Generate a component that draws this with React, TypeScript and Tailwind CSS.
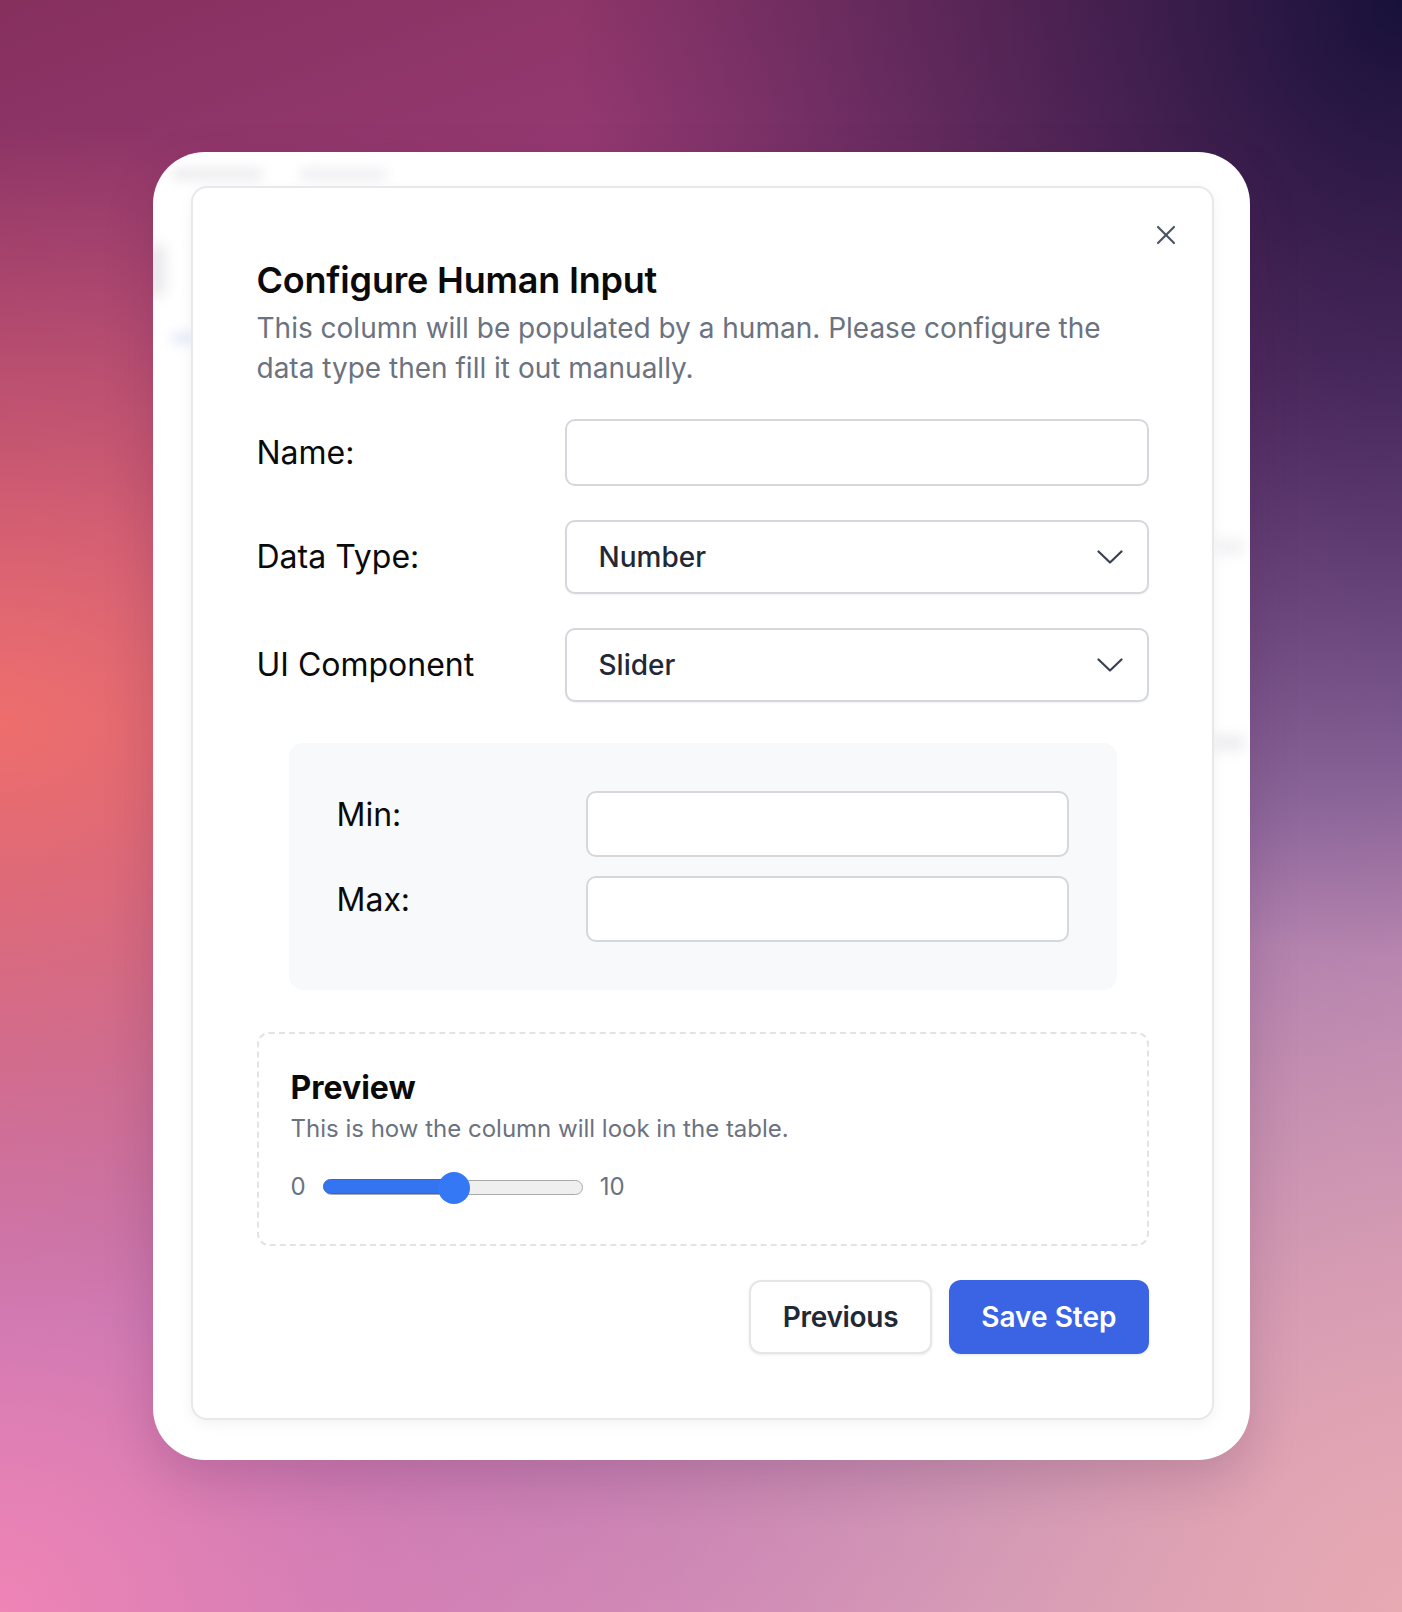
import { X } from "lucide-react";

function Chevron() {
  return (
    <svg width="26" height="14" viewBox="0 0 26 14" fill="none" className="shrink-0">
      <path d="M1.5 1.5 13 12.5 24.5 1.5" stroke="#374151" strokeWidth="2.2" strokeLinecap="round" strokeLinejoin="round" />
    </svg>
  );
}

function SelectBox({ value }: { value: string }) {
  return (
    <div className="col-span-2 h-[74px] flex items-center justify-between pl-[32px] pr-[24px] rounded-[10px] border-2 border-[#d4d7dc] bg-white shadow-[0_1px_2px_rgba(0,0,0,0.06)]">
      <span className="text-[28px] font-medium text-[#1f2937]">{value}</span>
      <Chevron />
    </div>
  );
}

export default function App() {
  return (
    <div className="w-full h-[1612px] flex items-center justify-center font-[Inter,sans-serif] bg-[radial-gradient(ellipse_at_100%_0%,#17113a_0%,rgba(23,17,58,0)_42%),radial-gradient(ellipse_at_0%_45%,#ee6e6c_0%,rgba(238,110,108,0)_48%),radial-gradient(ellipse_at_0%_100%,#ef84b6_0%,rgba(239,132,182,0)_50%),radial-gradient(ellipse_at_100%_100%,#e7a9b2_0%,rgba(231,169,178,0)_55%),linear-gradient(160deg,#86305e_0%,#9e3f7e_28%,#7a58a6_60%,#c98fc0_100%)]">
      {/* ── Outer frame ── */}
      <div className="relative w-[1097px] h-[1308px] rounded-[52px] bg-white pl-[38px] pt-[34px] shadow-[0_20px_50px_rgba(60,20,60,0.18)] overflow-hidden">
        {/* blurred app behind the dialog */}
        <div className="absolute left-[18px] top-[16px] w-[92px] h-[12px] rounded-full bg-[#ececef] blur-[6px]" />
        <div className="absolute left-[146px] top-[16px] w-[88px] h-[12px] rounded-full bg-[#efeff2] blur-[6px]" />
        <div className="absolute left-[-8px] top-[92px] w-[20px] h-[52px] rounded-md bg-[#e8e8ec] blur-[7px]" />
        <div className="absolute left-[18px] top-[180px] w-[24px] h-[12px] rounded-full bg-[#e4eaf8] blur-[6px]" />
        <div className="absolute right-[6px] top-[388px] w-[30px] h-[14px] rounded-full bg-[#efeff2] blur-[7px]" />
        <div className="absolute right-[4px] top-[584px] w-[34px] h-[14px] rounded-full bg-[#eaeaee] blur-[7px]" />

        {/* ── Dialog ── */}
        <div className="relative w-[1023px] rounded-[16px] border-2 border-[#e8e8ea] bg-white py-[64px] pl-[64px] pr-[63px] shadow-[0_4px_14px_rgba(0,0,0,0.05)]">
          <button className="absolute right-[30px] top-[31px] text-[#4b5563]">
            <X size={32} strokeWidth={1.6} />
          </button>

          <h2 className="text-[36px] leading-[56px] font-semibold text-[#0a0a0a] tracking-[-0.2px]">
            Configure Human Input
          </h2>
          <p className="text-[28px] leading-[40px] text-[#6b7280]">
            This column will be populated by a human. Please configure the
            <br />
            data type then fill it out manually.
          </p>

          {/* ── Fields ── */}
          <div className="mt-[31px] grid grid-cols-3 gap-x-[32px] items-center">
            <label className="text-[32px] text-[#0a0a0a]">Name:</label>
            <div className="col-span-2 h-[67px] rounded-[10px] border-2 border-[#d4d7dc] bg-white" />
          </div>
          <div className="mt-[34px] grid grid-cols-3 gap-x-[32px] items-center">
            <label className="text-[32px] text-[#0a0a0a]">Data Type:</label>
            <SelectBox value="Number" />
          </div>
          <div className="mt-[34px] grid grid-cols-3 gap-x-[32px] items-center">
            <label className="text-[32px] text-[#0a0a0a]">UI Component</label>
            <SelectBox value="Slider" />
          </div>

          {/* ── Slider options ── */}
          <div className="mt-[41px] mx-[32px] rounded-[14px] bg-[#f8f9fb] p-[48px] grid grid-cols-3 gap-x-[16px] gap-y-[19px]">
            <label className="text-[32px] leading-[48px] text-[#0a0a0a]">Min:</label>
            <div className="col-span-2 h-[66px] rounded-[10px] border-2 border-[#d4d7dc] bg-white" />
            <label className="text-[32px] leading-[48px] text-[#0a0a0a]">Max:</label>
            <div className="col-span-2 h-[66px] rounded-[10px] border-2 border-[#d4d7dc] bg-white" />
          </div>

          {/* ── Preview ── */}
          <div className="mt-[42px] rounded-[12px] border-2 border-dashed border-[#e2e3e6] px-[32px] pt-[34px] pb-[41px]">
            <h3 className="text-[32px] leading-[40px] font-bold text-[#0a0a0a]">Preview</h3>
            <p className="mt-[5px] text-[24px] leading-[32px] text-[#6b7280]">
              This is how the column will look in the table.
            </p>
            <div className="mt-[26px] h-[32px] flex items-center text-[24px] text-[#6b7280]">
              <span>0</span>
              <div className="relative ml-[18px] w-[259px] h-[15px] rounded-full border-[1.5px] border-[#a9a9ab] bg-[#efefef]">
                <div className="absolute left-[-1.5px] top-[-1.5px] w-[131px] h-[15px] rounded-full border-[1.5px] border-[#3c64c4] bg-[#3574f0]" />
                <div className="absolute left-[113px] top-[-9px] w-[32px] h-[32px] rounded-full bg-[#3478f6]" />
              </div>
              <span className="ml-[17px]">10</span>
            </div>
          </div>

          {/* ── Actions ── */}
          <div className="mt-[34px] flex justify-end gap-[17px]">
            <button className="h-[74px] px-[32px] rounded-[12px] border-2 border-[#e5e6e8] bg-white text-[28px] font-semibold text-[#1f2937] tracking-[-0.3px] shadow-[0_1px_3px_rgba(0,0,0,0.08)]">
              Previous
            </button>
            <button className="h-[74px] px-[32px] rounded-[12px] bg-[#3a64e3] text-[28px] font-semibold text-white shadow-[0_1px_3px_rgba(0,0,0,0.1)]">
              Save Step
            </button>
          </div>
        </div>
      </div>
    </div>
  );
}
